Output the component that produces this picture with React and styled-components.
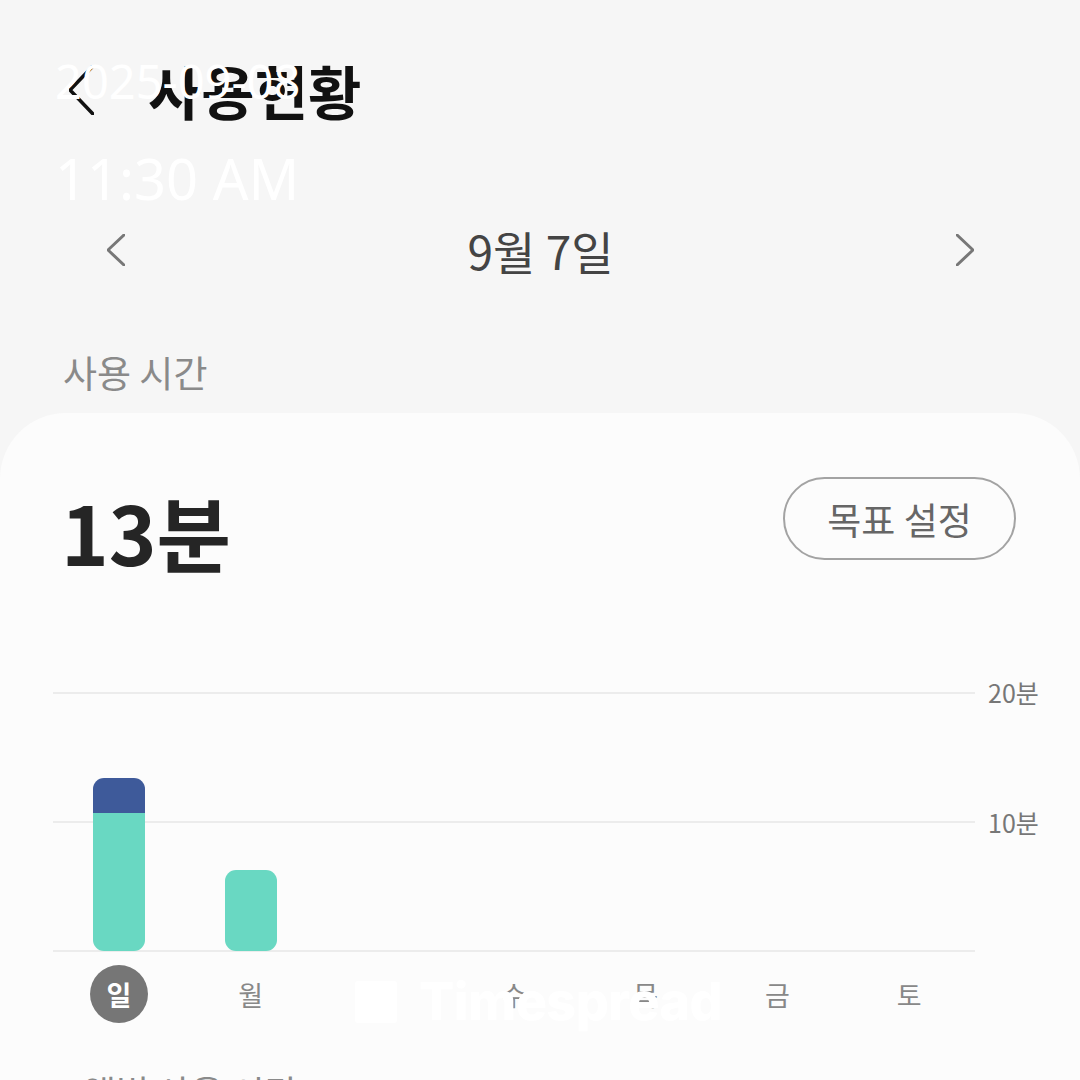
import React from 'react'
import styled, { createGlobalStyle } from 'styled-components'

const GlobalStyle = createGlobalStyle`
  html, body {
    margin: 0;
    padding: 0;
    background: #f6f6f6;
  }
  body {
    font-family: "Noto Sans CJK KR", "Noto Sans", sans-serif;
  }
`

const Page = styled.div`
  position: relative;
  width: 1080px;
  height: 1080px;
  overflow: hidden;
  background: #f6f6f6;
`

const TopBar = styled.div`
  height: 180px;
  display: flex;
  align-items: center;
  gap: 54px;
  padding-left: 69px;
  box-sizing: border-box;
`

const Title = styled.h1`
  margin: 0;
  font-size: 58px;
  font-weight: 700;
  line-height: 1;
  color: #111;
`

const DateNav = styled.div`
  height: 140px;
  display: flex;
  align-items: center;
  justify-content: space-between;
  padding: 0 106px 0 107px;
  box-sizing: border-box;
`

const DateText = styled.div`
  font-size: 46px;
  color: #444;
  line-height: 1;
`

const SectionLabel = styled.div`
  height: 93px;
  padding: 32px 0 0 63px;
  box-sizing: border-box;
  font-size: 37px;
  line-height: 40px;
  color: #8a8a8a;
`

const Card = styled.div`
  min-height: 667px;
  background: #fcfcfc;
  border-radius: 66px 66px 0 0;
  padding: 64px 0 0 53px;
  display: flex;
  flex-direction: column;
`

const SummaryRow = styled.div`
  display: flex;
  justify-content: space-between;
  align-items: flex-start;
  padding: 0 64px 0 8px;
`

const Total = styled.div`
  margin-top: 6px;
  font-size: 81px;
  font-weight: 700;
  line-height: 96px;
  color: #252525;
`

const GoalButton = styled.button`
  width: 233px;
  height: 83px;
  box-sizing: border-box;
  border: 2px solid #a3a3a3;
  border-radius: 42px;
  background: transparent;
  font-family: inherit;
  font-size: 37px;
  color: #666;
  padding: 0;
`

const ChartBlock = styled.div`
  margin-top: 112px;
  display: grid;
  grid-template-columns: 922px 1fr;
`

const Plot = styled.div`
  height: 261px;
  display: grid;
  grid-template-columns: repeat(7, 1fr);
  align-items: end;
  padding-bottom: 1px;
  box-sizing: border-box;
  background:
    linear-gradient(#ececec, #ececec) 0 1px / 100% 2px no-repeat,
    linear-gradient(#ececec, #ececec) 0 130px / 100% 2px no-repeat,
    linear-gradient(#ececec, #ececec) 0 259px / 100% 2px no-repeat;
`

const Bar = styled.div`
  justify-self: center;
  width: 52px;
  display: flex;
  flex-direction: column;
  border-radius: 11px;
  overflow: hidden;
`

const Segment = styled.div`
  background: ${p => p.$color};
`

const Axis = styled.div`
  display: flex;
  flex-direction: column;
  gap: 100px;
  padding-left: 13px;
`

const AxisLabel = styled.div`
  font-size: 25px;
  line-height: 30px;
  color: #777;
  &:first-child {
    margin-top: -14px;
  }
`

const DayRow = styled.div`
  width: 922px;
  height: 86px;
  display: grid;
  grid-template-columns: repeat(7, 1fr);
  align-items: start;
  padding-top: 13px;
  box-sizing: border-box;
`

const Day = styled.div`
  justify-self: center;
  width: 58px;
  height: 58px;
  border-radius: 50%;
  display: flex;
  align-items: center;
  justify-content: center;
  font-size: 27px;
  font-weight: ${p => (p.$active ? 700 : 400)};
  color: ${p => (p.$active ? '#fff' : '#888')};
  background: ${p => (p.$active ? '#767676' : 'transparent')};
`

const NextLabel = styled.div`
  margin-top: 33px;
  padding-left: 30px;
  font-size: 36px;
  line-height: 40px;
  color: #8a8a8a;
`

const Stamp = styled.div`
  position: absolute;
  top: 58px;
  left: 55px;
  display: flex;
  flex-direction: column;
  font-family: "Noto Sans", sans-serif;
  color: #fff;
  z-index: 5;
`

const StampDate = styled.div`
  font-size: 47px;
  line-height: 47px;
`

const StampTime = styled.div`
  margin-top: 45px;
  font-size: 56px;
  line-height: 56px;
`

const Brand = styled.div`
  position: absolute;
  left: 355px;
  top: 972px;
  display: flex;
  align-items: center;
  gap: 22px;
  z-index: 5;
`

const BrandName = styled.div`
  font-family: Inter, "Noto Sans", sans-serif;
  font-size: 52px;
  font-weight: 800;
  letter-spacing: -0.5px;
  line-height: 60px;
  color: #fff;
`

const Chevron = ({ dir = 'left', w, h, stroke, width }) => (
  <svg width={w} height={h} viewBox={`0 0 ${w} ${h}`} fill="none">
    <polyline
      points={
        dir === 'left'
          ? `${w - 1},1 1,${h / 2} ${w - 1},${h - 1}`
          : `1,1 ${w - 1},${h / 2} 1,${h - 1}`
      }
      stroke={stroke}
      strokeWidth={width}
      strokeLinecap="round"
      strokeLinejoin="round"
    />
  </svg>
)

const BrandIcon = () => (
  <svg width="42" height="42" viewBox="0 0 42 42">
    <rect x="0" y="0" width="42" height="42" rx="3" fill="#fff" />
  </svg>
)

const PX_PER_MIN = 12.9
const days = [
  { label: '일', parts: [2.7, 10.7], active: true },
  { label: '월', parts: [0, 6.3] },
  { label: '화', parts: [] },
  { label: '수', parts: [] },
  { label: '목', parts: [] },
  { label: '금', parts: [] },
  { label: '토', parts: [] },
]
const partColors = ['#3e5a9a', '#69d8c2']

export default function App() {
  return (
    <Page>
      <GlobalStyle />
      <TopBar>
        <Chevron dir="left" w={25} h={50} stroke="#111" width={3.6} />
        <Title>사용현황</Title>
      </TopBar>

      <DateNav>
        <Chevron dir="left" w={18} h={32} stroke="#777" width={3} />
        <DateText>9월 7일</DateText>
        <Chevron dir="right" w={18} h={32} stroke="#777" width={3} />
      </DateNav>

      <SectionLabel>사용 시간</SectionLabel>

      <Card>
        <SummaryRow>
          <Total>13분</Total>
          <GoalButton>목표 설정</GoalButton>
        </SummaryRow>

        <ChartBlock>
          <Plot>
            {days.map(d => (
              <Bar key={d.label}>
                {d.parts.map((m, i) =>
                  m > 0 ? (
                    <Segment
                      key={i}
                      $color={partColors[i]}
                      style={{ height: Math.round(m * PX_PER_MIN) }}
                    />
                  ) : null
                )}
              </Bar>
            ))}
          </Plot>
          <Axis>
            <AxisLabel>20분</AxisLabel>
            <AxisLabel>10분</AxisLabel>
          </Axis>
        </ChartBlock>

        <DayRow>
          {days.map(d => (
            <Day key={d.label} $active={d.active}>{d.label}</Day>
          ))}
        </DayRow>

        <NextLabel>앱별 사용 시간</NextLabel>
      </Card>

      <Stamp>
        <StampDate>2025-09-08</StampDate>
        <StampTime>11:30 AM</StampTime>
      </Stamp>

      <Brand>
        <BrandIcon />
        <BrandName>Timespread</BrandName>
      </Brand>
    </Page>
  )
}
